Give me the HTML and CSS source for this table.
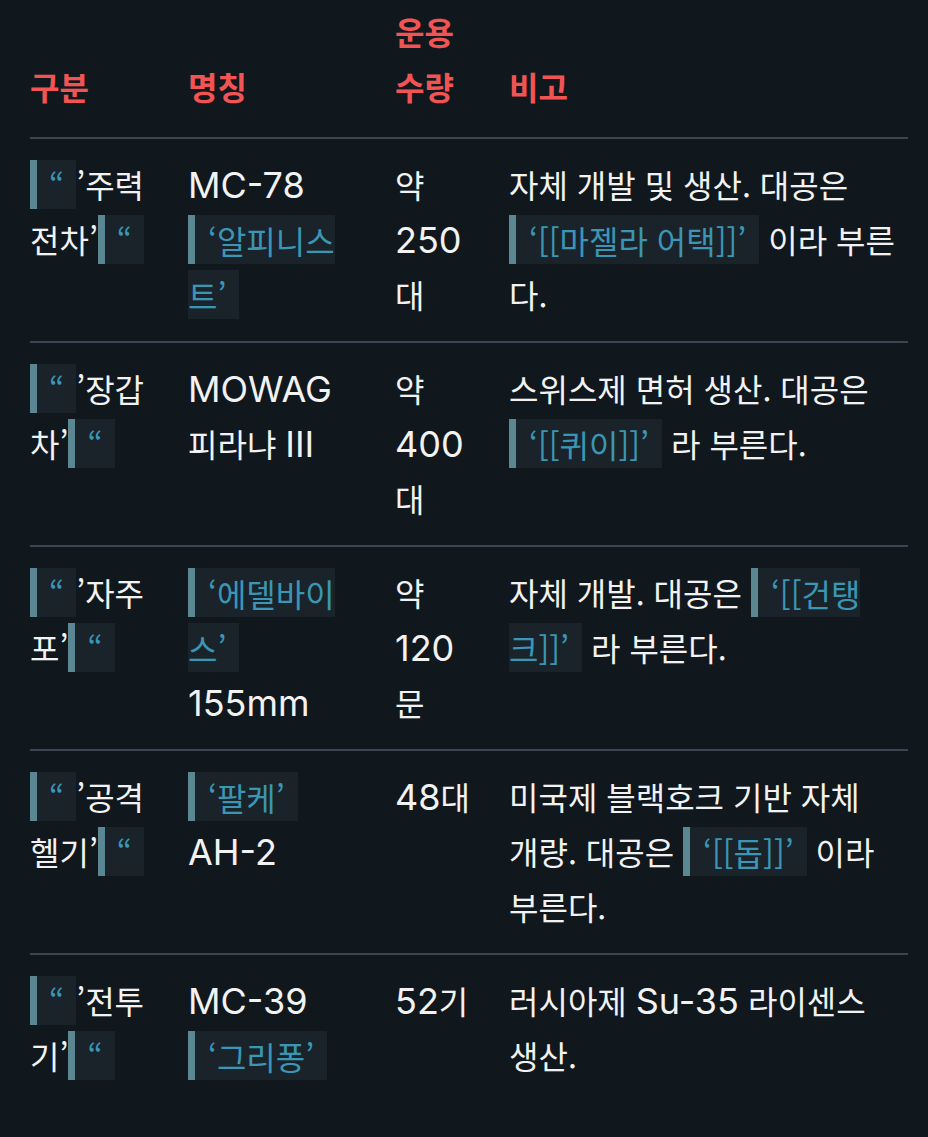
FILE: index.html
```html
<!DOCTYPE html>
<html lang="ko">
<head>
<meta charset="utf-8">
<title>장비 목록</title>
<link rel="stylesheet" href="styles.css">
</head>
<body>
<table class="equip">
  <colgroup>
    <col class="w1"><col class="w2"><col class="w3"><col class="w4">
  </colgroup>
  <thead>
    <tr>
      <th>구분</th>
      <th class="c2">명칭</th>
      <th>운용 수량</th>
      <th class="c4">비고</th>
    </tr>
  </thead>
  <tbody>
    <tr>
      <td><span class="q">“</span>’주력 전차’<span class="q">“</span></td>
      <td class="c2"><span class="en">MC-78</span> <span class="code">‘알피니스트’</span></td>
      <td>약 <span class="en">250</span>대</td>
      <td class="c4">자체 개발 및 생산. 대공은 <span class="code">‘[[마젤라 어택]]’</span> 이라 부른다.</td>
    </tr>
    <tr>
      <td><span class="q">“</span>’장갑차’<span class="q">“</span></td>
      <td class="c2"><span class="en">MOWAG</span> 피라냐 <span class="en">III</span></td>
      <td>약 <span class="en">400</span>대</td>
      <td class="c4">스위스제 면허 생산. 대공은 <span class="code">‘[[퀴이]]’</span> 라 부른다.</td>
    </tr>
    <tr>
      <td><span class="q">“</span>’자주포’<span class="q">“</span></td>
      <td class="c2"><span class="code">‘에델바이스’</span> <span class="en">155mm</span></td>
      <td>약 <span class="en">120</span>문</td>
      <td class="c4">자체 개발. 대공은 <span class="code">‘[[건탱크]]’</span> 라 부른다.</td>
    </tr>
    <tr>
      <td><span class="q">“</span>’공격 헬기’<span class="q">“</span></td>
      <td class="c2"><span class="code">‘팔케’</span> <span class="en">AH-2</span></td>
      <td><span class="en">48</span>대</td>
      <td class="c4">미국제 블랙호크 기반 자체 개량. 대공은 <span class="code">‘[[돕]]’</span> 이라 부른다.</td>
    </tr>
    <tr>
      <td><span class="q">“</span>’전투기’<span class="q">“</span></td>
      <td class="c2"><span class="en">MC-39</span> <span class="code">‘그리퐁’</span></td>
      <td><span class="en">52</span>기</td>
      <td class="c4">러시아제 <span class="en">Su-35</span> 라이센스 생산.</td>
    </tr>
  </tbody>
</table>
</body>
</html>
```

FILE: styles.css
```css
html, body {
  margin: 0;
  background: #10181e;
}

body {
  color: #f2f2f2;
  font-family: "Noto Sans CJK KR", "Noto Sans", sans-serif;
  font-size: 32px;
  line-height: 55px;
}

.equip {
  margin-left: 30px;
  width: 878px;
  table-layout: fixed;
  border-collapse: collapse;
}

.w1 { width: 158px; }
.w2 { width: 207px; }
.w3 { width: 114px; }
.w4 { width: 399px; }

.equip th {
  color: #f25454;
  font-weight: 700;
  text-align: left;
  vertical-align: bottom;
  padding: 4px 30px 23px 0;
  border-bottom: 2px solid #3c4652;
}

.equip td {
  vertical-align: top;
  padding: 18px 30px 19px 0;
  border-bottom: 2px solid #3c4652;
}

.equip tbody tr:last-child td {
  border-bottom: none;
}

.equip .c2 { padding-right: 37px; }
.equip .c4 { padding-right: 12px; }

.en {
  font-family: Inter, "Noto Sans", sans-serif;
  font-size: 36px;
  line-height: 53px;
}

.code, .q {
  color: #3a96b4;
  background: #1b232a;
  border-left: 7px solid #5a8791;
  padding: 1.5px 13px;
}

.q {
  padding: 1.5px 12px;
}
```
